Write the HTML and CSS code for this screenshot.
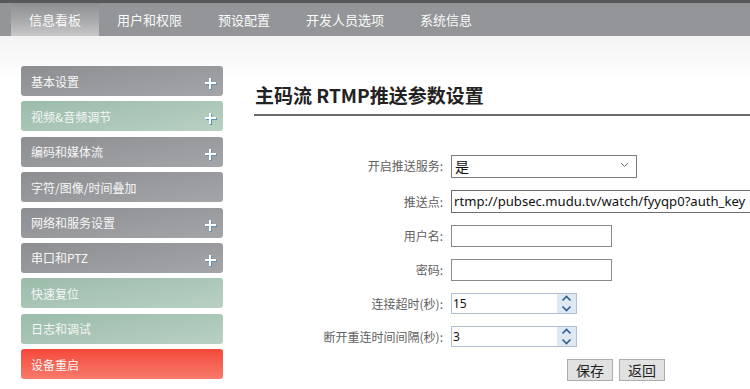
FILE: index.html
```html
<!DOCTYPE html>
<html lang="zh-CN">
<head>
    <meta charset="UTF-8">
    <meta name="viewport" content="width=device-width, initial-scale=1.0">
    <title>主码流 RTMP推送参数设置</title>
    <link rel="stylesheet" href="styles.css">
</head>
<body>
    <div class="topline"></div>
    <ul class="nav">
        <li class="active">信息看板</li>
        <li>用户和权限</li>
        <li>预设配置</li>
        <li>开发人员选项</li>
        <li>系统信息</li>
    </ul>

    <div class="main">
        <ul class="menu">
            <li class="gray">基本设置<svg class="plus" width="13" height="13" viewBox="0 0 13 13"><path d="M1 6h11M6 1v11" stroke="#5b8fb6" stroke-width="2" transform="translate(1 1)"/><path d="M1 6h11M6 1v11" stroke="#fff" stroke-width="2"/></svg></li>
            <li class="green">视频&amp;音频调节<svg class="plus" width="13" height="13" viewBox="0 0 13 13"><path d="M1 6h11M6 1v11" stroke="#5b8fb6" stroke-width="2" transform="translate(1 1)"/><path d="M1 6h11M6 1v11" stroke="#fff" stroke-width="2"/></svg></li>
            <li class="gray">编码和媒体流<svg class="plus" width="13" height="13" viewBox="0 0 13 13"><path d="M1 6h11M6 1v11" stroke="#5b8fb6" stroke-width="2" transform="translate(1 1)"/><path d="M1 6h11M6 1v11" stroke="#fff" stroke-width="2"/></svg></li>
            <li class="gray">字符/图像/时间叠加</li>
            <li class="gray">网络和服务设置<svg class="plus" width="13" height="13" viewBox="0 0 13 13"><path d="M1 6h11M6 1v11" stroke="#5b8fb6" stroke-width="2" transform="translate(1 1)"/><path d="M1 6h11M6 1v11" stroke="#fff" stroke-width="2"/></svg></li>
            <li class="gray">串口和PTZ<svg class="plus" width="13" height="13" viewBox="0 0 13 13"><path d="M1 6h11M6 1v11" stroke="#5b8fb6" stroke-width="2" transform="translate(1 1)"/><path d="M1 6h11M6 1v11" stroke="#fff" stroke-width="2"/></svg></li>
            <li class="green">快速复位</li>
            <li class="green">日志和调试</li>
            <li class="red">设备重启</li>
        </ul>

        <div class="content">
            <h1>主码流 RTMP推送参数设置</h1>
            <form class="form">
                <label>开启推送服务:</label>
                <div class="select-wrap">
                    <select class="select">
                        <option>是</option>
                        <option>否</option>
                    </select>
                    <svg class="caret" width="9" height="6" viewBox="0 0 9 6"><path d="M1 1 L4.5 4.5 L8 1" fill="none" stroke="#6f6f6f" stroke-width="1"/></svg>
                </div>

                <label>推送点:</label>
                <input class="text url" type="text" value="rtmp://pubsec.mudu.tv/watch/fyyqp0?auth_key">

                <label>用户名:</label>
                <input class="text short" type="text">

                <label>密码:</label>
                <input class="text short" type="password">

                <label>连接超时(秒):</label>
                <div class="spin">
                    <input type="text" value="15">
                    <span class="spin-btns">
                        <svg width="11" height="7" viewBox="0 0 11 7"><path d="M1.5 5.5 L5.5 1.5 L9.5 5.5" fill="none" stroke="#2d5d8f" stroke-width="1.6"/></svg>
                        <svg width="11" height="7" viewBox="0 0 11 7"><path d="M1.5 1.5 L5.5 5.5 L9.5 1.5" fill="none" stroke="#2d5d8f" stroke-width="1.6"/></svg>
                    </span>
                </div>

                <label>断开重连时间间隔(秒):</label>
                <div class="spin">
                    <input type="text" value="3">
                    <span class="spin-btns">
                        <svg width="11" height="7" viewBox="0 0 11 7"><path d="M1.5 5.5 L5.5 1.5 L9.5 5.5" fill="none" stroke="#2d5d8f" stroke-width="1.6"/></svg>
                        <svg width="11" height="7" viewBox="0 0 11 7"><path d="M1.5 1.5 L5.5 5.5 L9.5 1.5" fill="none" stroke="#2d5d8f" stroke-width="1.6"/></svg>
                    </span>
                </div>

                <div class="actions">
                    <button type="button" class="btn">保存</button>
                    <button type="button" class="btn">返回</button>
                </div>
            </form>
        </div>
    </div>
</body>
</html>
```

FILE: styles.css
```css
/* 页面基础 */
body {
    margin: 0;
    font-family: "Noto Sans CJK SC", "Liberation Sans", sans-serif;
    background: linear-gradient(180deg, #e3e3e3 0, #f4f4f4 40px, #ffffff 80px) no-repeat;
    overflow: hidden;
    height: 389px;
}

.topline {
    height: 3px;
    background-color: #58585a;
}

/* 顶部导航 */
.nav {
    display: flex;
    height: 33px;
    margin: 0;
    padding: 0 0 0 11px;
    list-style: none;
    background-color: #939598;
}

.nav li {
    padding: 0 18px;
    line-height: 33px;
    font-size: 13px;
    color: #fafafa;
}

.nav .active {
    background: linear-gradient(180deg, #8e8f92 0, #a9aaac 55%, #c9c9ca 100%);
    border-top-left-radius: 4px;
}

/* 主体 */
.main {
    display: flex;
    gap: 31px;
    padding: 30px 0 0 21px;
}

.menu {
    width: 202px;
    flex: none;
    margin: 0;
    padding: 0;
    list-style: none;
}

.menu li {
    display: flex;
    align-items: center;
    justify-content: space-between;
    height: 30px;
    margin-bottom: 5.4px;
    padding: 0 6px 0 10px;
    border-radius: 3px;
    font-size: 12px;
    color: #f6f6f6;
    box-shadow: 0 1px 1px rgba(255, 255, 255, 0.8);
}

.menu .gray {
    background: linear-gradient(170deg, #8d8e92 0, #a4a5a8 100%);
}

.menu .green {
    background: linear-gradient(170deg, #9bbcaa 0, #b8d0c3 100%);
}

.menu .red {
    background: linear-gradient(180deg, #f4493a 0, #f77a6c 100%);
}

/* 加号图标 */
.plus {
    display: block;
    margin-top: 5px;
}

/* 内容区 */
.content {
    flex: 1;
}

.content h1 {
    margin: 17px 0 0 0;
    padding: 0 0 7px 1px;
    font-size: 19px;
    line-height: 24px;
    font-weight: bold;
    color: #222;
    border-bottom: 2px solid #6a6a6a;
}

.form {
    display: grid;
    grid-template-columns: 189px auto;
    column-gap: 8px;
    row-gap: 12px;
    align-items: center;
    margin-top: 37px;
}

.form label {
    text-align: right;
    font-size: 12px;
    color: #606060;
    white-space: nowrap;
}

.select-wrap {
    position: relative;
    width: 186px;
}

.select {
    appearance: none;
    width: 186px;
    height: 23px;
    margin: 0;
    padding: 0 0 0 3px;
    border: 1px solid #7a7a7a;
    background: #fff;
    font-family: "Noto Sans CJK SC", sans-serif;
    font-size: 14px;
    color: #111;
}

.caret {
    position: absolute;
    right: 8px;
    top: 9px;
}

.text {
    box-sizing: border-box;
    height: 22px;
    margin: 0;
    padding: 0 2px;
    border: 1px solid #8a8a8a;
    background: #fff;
    font-family: "Noto Sans", "Noto Sans CJK SC", sans-serif;
    font-size: 13.1px;
    color: #111;
}

.url {
    width: 330px;
    height: 23px;
    border-color: #6e6e6e;
}

.short {
    width: 161px;
}

/* 数字输入框 */
.spin {
    display: flex;
    box-sizing: border-box;
    width: 126px;
    height: 21px;
    border: 1px solid #aebfd6;
    background: #fff;
}

.spin input {
    flex: 1;
    min-width: 0;
    border: none;
    padding: 0 1px;
    font-family: "Noto Sans", sans-serif;
    font-size: 12px;
    color: #111;
    outline: none;
}

.spin-btns {
    display: flex;
    flex-direction: column;
    align-items: center;
    justify-content: center;
    gap: 3px;
    width: 19px;
    background-color: #dfe7f2;
}

.spin-btns svg {
    display: block;
}

/* 按钮 */
.actions {
    grid-column: 2;
    display: flex;
    gap: 6px;
    padding-left: 116px;
}

.btn {
    height: 22px;
    padding: 0 8px;
    border: 1px solid #adadad;
    background-color: #e1e1e1;
    font-family: "Noto Sans CJK SC", sans-serif;
    font-size: 14px;
    line-height: 18px;
    color: #222;
}
```
